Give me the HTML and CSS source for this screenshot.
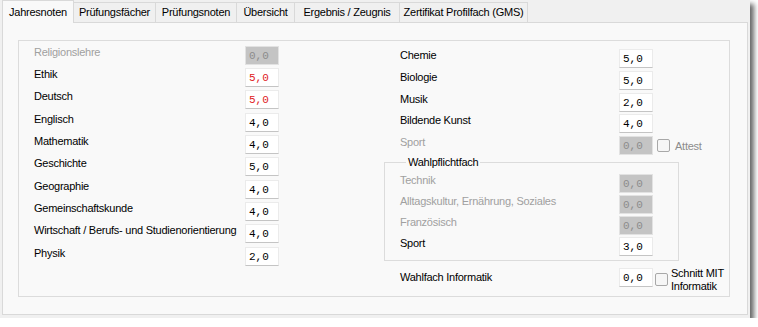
FILE: index.html
```html
<!DOCTYPE html>
<html lang="de">
<head>
  <meta charset="utf-8">
  <title>Jahresnoten</title>
  <link rel="stylesheet" href="styles.css">
</head>
<body>
  <div class="window">
    <div class="tabs">
      <div class="tab active tab-jahr">Jahresnoten</div>
      <div class="tab tab-pf">Prüfungsfächer</div>
      <div class="tab tab-pn">Prüfungsnoten</div>
      <div class="tab tab-ue">Übersicht</div>
      <div class="tab tab-erg">Ergebnis / Zeugnis</div>
      <div class="tab tab-zert">Zertifikat Profilfach (GMS)</div>
    </div>
    <div class="panel">
      <div class="group">
        <div class="col col-left">
          <div class="row off"><span class="label">Religionslehre</span><span class="box">0,0</span></div>
          <div class="row"><span class="label">Ethik</span><span class="box red">5,0</span></div>
          <div class="row"><span class="label">Deutsch</span><span class="box red">5,0</span></div>
          <div class="row"><span class="label">Englisch</span><span class="box">4,0</span></div>
          <div class="row"><span class="label">Mathematik</span><span class="box">4,0</span></div>
          <div class="row"><span class="label">Geschichte</span><span class="box">5,0</span></div>
          <div class="row"><span class="label">Geographie</span><span class="box">4,0</span></div>
          <div class="row"><span class="label">Gemeinschaftskunde</span><span class="box">4,0</span></div>
          <div class="row"><span class="label">Wirtschaft / Berufs- und Studienorientierung</span><span class="box">4,0</span></div>
          <div class="row"><span class="label">Physik</span><span class="box">2,0</span></div>
        </div>
        <div class="col col-right">
          <div class="row"><span class="label">Chemie</span><span class="box">5,0</span></div>
          <div class="row"><span class="label">Biologie</span><span class="box">5,0</span></div>
          <div class="row"><span class="label">Musik</span><span class="box">2,0</span></div>
          <div class="row"><span class="label">Bildende Kunst</span><span class="box">4,0</span></div>
          <div class="row off"><span class="label">Sport</span><span class="box">0,0</span><span class="check"></span><span class="check-text">Attest</span></div>
          <fieldset class="wpf">
            <legend>Wahlpflichtfach</legend>
            <div class="row off"><span class="label">Technik</span><span class="box">0,0</span></div>
            <div class="row off"><span class="label">Alltagskultur, Ernährung, Soziales</span><span class="box">0,0</span></div>
            <div class="row off"><span class="label">Französisch</span><span class="box">0,0</span></div>
            <div class="row"><span class="label">Sport</span><span class="box">3,0</span></div>
          </fieldset>
          <div class="row row-info"><span class="label">Wahlfach Informatik</span><span class="box">0,0</span><span class="check"></span><span class="check-text">Schnitt MIT<br>Informatik</span></div>
        </div>
      </div>
    </div>
  </div>
</body>
</html>
```

FILE: styles.css
```css
body {
  margin: 0;
  background: #FFFFFF;
  font-family: "Liberation Sans", Arial, sans-serif;
  font-size: 11px;
  letter-spacing: -0.25px;
  color: #000000;
}

.window {
  width: 750px;
  height: 318px;
  padding: 0 2px 3px 2px;
  box-sizing: border-box;
  background: #F0F0F0;
  box-shadow: 4px 4px 5px rgba(0, 0, 0, 0.6);
  display: flex;
  flex-direction: column;
}

/* tab strip */

.tabs {
  height: 22px;
  display: flex;
  align-items: flex-end;
}

.tab {
  height: 20px;
  line-height: 19px;
  margin-right: -1px;
  border: 1px solid #D9D9D9;
  border-bottom: none;
  box-sizing: border-box;
  background: #F0F0F0;
  text-align: center;
  white-space: nowrap;
}

.tab.active {
  height: 23px;
  line-height: 22px;
  margin-bottom: -1px;
  background: #F9F9F9;
  position: relative;
  z-index: 1;
}

.tab-jahr { width: 72px; }
.tab-pf { width: 83px; }
.tab-pn { width: 82px; }
.tab-ue { width: 59px; }
.tab-erg { width: 106px; }
.tab-zert { width: 129px; }

.panel {
  flex: 1;
  border: 1px solid #D9D9D9;
  background: #F9F9F9;
}

.group {
  margin: 17px 17px 0 15px;
  height: 257px;
  box-sizing: border-box;
  border: 1px solid #DCDCDC;
  display: flex;
}

.col-left {
  width: 245px;
  padding: 3px 0 0 15px;
}

.col-right {
  margin-left: 105px;
  width: 340px;
  padding-top: 7px;
}

/* rows */

.row {
  display: flex;
  align-items: center;
  height: 22.33px;
}

.col-right > .row {
  height: 21.7px;
  padding-left: 16px;
}

.label {
  flex-shrink: 0;
  width: 211px;
  padding-bottom: 7px;
  white-space: nowrap;
}

.col-right .label {
  width: 219px;
}

.box {
  flex-shrink: 0;
  width: 34px;
  height: 19px;
  box-sizing: border-box;
  padding-left: 3px;
  line-height: 18px;
  background: #FFFFFF;
  border: 1px solid #EBEBEB;
  border-bottom-color: #C4C4C4;
  font-family: "Liberation Mono", "Courier New", monospace;
  font-size: 11px;
  letter-spacing: 0;
}

.box.red {
  color: #E0201C;
}

.row.off .label {
  color: #A0A0A0;
}

.row.off .box {
  background: #C4C4C4;
  color: #8C8C8C;
  border-color: #E2E2E2;
}

.check {
  flex-shrink: 0;
  width: 13px;
  height: 13px;
  margin-left: 4px;
  border: 1px solid #A8A8A8;
  border-radius: 2px;
  background: #F6F6F6;
  box-sizing: border-box;
}

.check-text {
  margin-left: 5px;
  color: #8C8C8C;
  white-space: nowrap;
}

.row-info {
  margin-top: 7px;
  align-items: flex-start;
}

.row-info .label {
  padding-bottom: 0;
  margin-top: 3px;
}

.row-info .check {
  margin-left: 2px;
  margin-top: 5px;
}

.row-info .check-text {
  margin-left: 3px;
  color: #000000;
  line-height: 13px;
  margin-top: -1px;
}

/* Wahlpflichtfach */

.wpf {
  margin: 0;
  width: 295px;
  height: 105px;
  box-sizing: border-box;
  padding: 4px 0 0 15px;
  border: 1px solid #DCDCDC;
}

.wpf legend {
  margin-left: 6px;
  padding: 0 2px;
}

.wpf .row {
  height: 21.3px;
}
```
